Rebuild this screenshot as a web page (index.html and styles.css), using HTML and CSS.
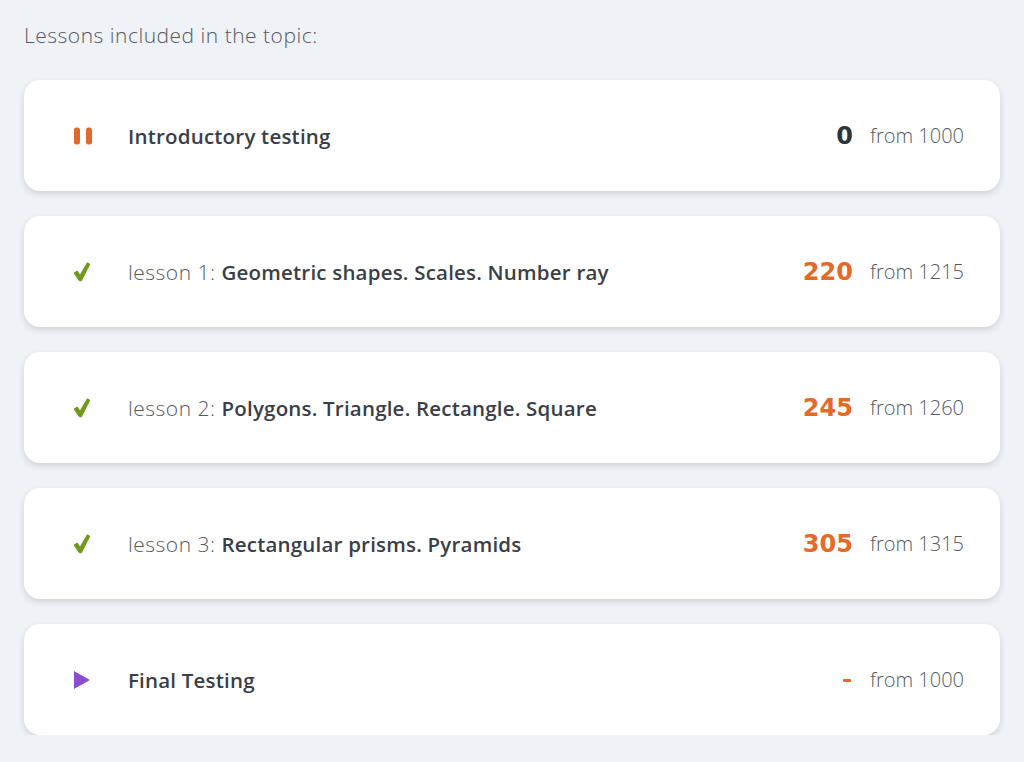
FILE: index.html
```html
<!DOCTYPE html>
<html>
<head>
<meta charset="utf-8">
<link rel="stylesheet" href="styles.css">
</head>
<body>
<div class="page">
  <h2 class="heading">Lessons included in the topic:</h2>
  <div class="list">
    <div class="card">
      <span class="icon">
        <svg width="20" height="18" viewBox="0 0 20 18"><rect x="1" y="0.5" width="6" height="17" rx="2.5" fill="#e2692a"/><rect x="13" y="0.5" width="6" height="17" rx="2.5" fill="#e2692a"/></svg>
      </span>
      <span class="title"><b>Introductory testing</b></span>
      <span class="score dark">0</span>
      <span class="from">from 1000</span>
    </div>
    <div class="card">
      <span class="icon">
        <svg width="18" height="20" viewBox="0 0 18 20"><path d="M1 11 L4.3 9 L7 13.3 L14.3 0.8 L16.8 2.2 L8.4 18.8 L6.4 18.8 Z" fill="#6f9a1c" stroke="#6f9a1c" stroke-width="1" stroke-linejoin="round"/></svg>
      </span>
      <span class="title"><span class="pre">lesson 1: </span><b>Geometric shapes. Scales. Number ray</b></span>
      <span class="score">220</span>
      <span class="from">from 1215</span>
    </div>
    <div class="card">
      <span class="icon">
        <svg width="18" height="20" viewBox="0 0 18 20"><path d="M1 11 L4.3 9 L7 13.3 L14.3 0.8 L16.8 2.2 L8.4 18.8 L6.4 18.8 Z" fill="#6f9a1c" stroke="#6f9a1c" stroke-width="1" stroke-linejoin="round"/></svg>
      </span>
      <span class="title"><span class="pre">lesson 2: </span><b>Polygons. Triangle. Rectangle. Square</b></span>
      <span class="score">245</span>
      <span class="from">from 1260</span>
    </div>
    <div class="card">
      <span class="icon">
        <svg width="18" height="20" viewBox="0 0 18 20"><path d="M1 11 L4.3 9 L7 13.3 L14.3 0.8 L16.8 2.2 L8.4 18.8 L6.4 18.8 Z" fill="#6f9a1c" stroke="#6f9a1c" stroke-width="1" stroke-linejoin="round"/></svg>
      </span>
      <span class="title"><span class="pre">lesson 3: </span><b>Rectangular prisms. Pyramids</b></span>
      <span class="score">305</span>
      <span class="from">from 1315</span>
    </div>
    <div class="card">
      <span class="icon">
        <svg width="18" height="20" viewBox="0 0 18 20"><path d="M1 1 L17 10 L1 19 Z" fill="#8a4fd0"/></svg>
      </span>
      <span class="title"><b>Final Testing</b></span>
      <span class="score dash"></span>
      <span class="from">from 1000</span>
    </div>
  </div>
</div>
</body>
</html>
```

FILE: styles.css
```css
html, body {
  margin: 0;
  padding: 0;
  background: #eff2f7;
}
body {
  font-family: "Open Sans", Lato, sans-serif;
  color: #3a3e46;
}
.page {
  padding: 22px 24px 0 24px;
}
.heading {
  margin: 0 0 31px 0;
  font-size: 21px;
  font-weight: 300;
  color: #55595f;
  line-height: 27px;
  letter-spacing: 0.5px;
}
.list {
  display: flex;
  flex-direction: column;
  gap: 25px;
}
.card {
  background: #ffffff;
  border-radius: 16px;
  height: 111px;
  display: flex;
  align-items: center;
  padding: 0 36px 0 49px;
  box-shadow: 0 3px 6px rgba(60, 70, 90, 0.18);
  box-sizing: border-box;
}
.icon {
  width: 55px;
  display: flex;
  align-items: center;
}
.title {
  flex: 1;
  font-size: 20.5px;
  letter-spacing: 0.2px;
  color: #3a3e46;
}
.title b {
  font-weight: 600;
}
.pre {
  font-weight: 300;
  font-size: 21px;
  letter-spacing: 0.5px;
  color: #55595f;
}
.score {
  font-family: "DejaVu Sans", sans-serif;
  font-weight: 700;
  font-size: 24px;
  color: #e46a28;
  margin-right: 17px;
}
.score.dark {
  color: #2f333a;
}
.score.dash {
  width: 8px;
  height: 3px;
  background: #e46a28;
  border-radius: 1px;
  margin-right: 19px;
  margin-top: 2px;
}
.from {
  font-size: 20px;
  font-weight: 300;
  color: #55595f;
}
```
